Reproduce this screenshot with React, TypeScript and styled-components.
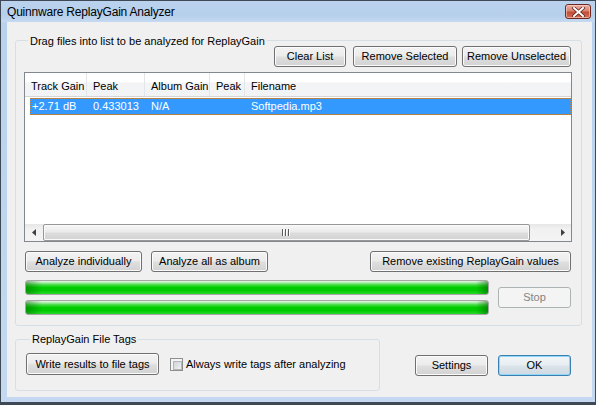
import React from "react";
import styled, { createGlobalStyle, css } from "styled-components";

const Global = createGlobalStyle`
  html, body { margin: 0; padding: 0; }
  body {
    background: #ffffff;
    font-family: "Liberation Sans", Arial, sans-serif;
    font-size: 11px;
    color: #000;
  }
  * { box-sizing: border-box; }
`;

const Window = styled.div`
  width: 596px;
  height: 405px;
  display: flex;
  flex-direction: column;
  background: linear-gradient(to bottom, #b9d1ec 0%, #c4d9f1 100%);
  border: 1px solid #3f4855;
  border-bottom-width: 3px;
  padding: 0 3px 5px 6px;
`;

const TitleBar = styled.div`
  height: 21px;
  display: flex;
  align-items: flex-start;
  margin-left: -6px;
  margin-right: -3px;
  padding: 0 0 0 6px;
  background: linear-gradient(to bottom, #bad2ed 0%, #b6cfeb 70%, #c5daf2 100%);
`;

const Title = styled.div`
  flex: 1;
  font-size: 12px;
  letter-spacing: -0.2px;
  line-height: 21px;
  padding-top: 1px;
  color: #000;
`;

const CloseBtn = styled.div`
  width: 26px;
  height: 15px;
  margin: 3px 4px 0 0;
  border: 1px solid #6e2a22;
  border-radius: 3px;
  background: linear-gradient(to bottom, #e9b0a3 0%, #d88474 45%, #c24d35 55%, #d4705a 100%);
  box-shadow: inset 0 0 0 1px rgba(255, 220, 210, 0.55);
  display: flex;
  align-items: center;
  justify-content: center;
`;

const Client = styled.div`
  flex: 1;
  background: #f0f0f0;
  display: flex;
  flex-direction: column;
  padding: 18px 10px 6px 8px;
`;

const Group = styled.div<{ $w?: number }>`
  border: 1px solid #d5dfe5;
  border-radius: 3px;
  display: flex;
  flex-direction: column;
  ${(p) => (p.$w ? `width: ${p.$w}px;` : "")}
`;

const MainGroup = styled(Group)`
  padding: 5px 9px 10px 8px;
`;

const TagGroup = styled(Group)`
  padding: 13px 8px 15px 10px;
`;

const GroupLabel = styled.div<{ $mt: number; $mb: number }>`
  align-self: flex-start;
  background: #f0f0f0;
  line-height: 13px;
  height: 13px;
  padding: 0 2px;
  margin: ${(p) => p.$mt}px 0 ${(p) => p.$mb}px 4px;
  white-space: nowrap;
  position: relative;
  z-index: 1;
`;

const Row = styled.div<{ $gap?: number; $mt?: number; $justify?: string; $align?: string }>`
  display: flex;
  align-items: ${(p) => p.$align ?? "center"};
  justify-content: ${(p) => p.$justify ?? "flex-start"};
  gap: ${(p) => p.$gap ?? 0}px;
  margin-top: ${(p) => p.$mt ?? 0}px;
`;

const Spacer = styled.div`
  flex: 1;
`;

const Button = styled.button<{ $w: number; $h?: number; $kind?: "normal" | "default" | "disabled"; $mr?: number }>`
  width: ${(p) => p.$w}px;
  height: ${(p) => p.$h ?? 21}px;
  margin: 0 ${(p) => p.$mr ?? 0}px 0 0;
  padding: 0 0 1px;
  font-family: "Liberation Sans", Arial, sans-serif;
  font-size: 11px;
  color: #000;
  border: 1px solid #707070;
  border-radius: 3px;
  background: linear-gradient(to bottom, #f3f3f3 0%, #ececec 45%, #dedede 55%, #d2d2d2 100%);
  box-shadow: inset 0 0 0 1px #fbfbfb;
  white-space: nowrap;
  flex-shrink: 0;
  ${(p) =>
    p.$kind === "default" &&
    css`
      border-color: #3c7fb1;
      box-shadow: inset 0 0 0 1px #8fd7f8;
      background: linear-gradient(to bottom, #f1f5f8 0%, #e8eef2 45%, #dae3ea 55%, #cfd9e1 100%);
    `}
  ${(p) =>
    p.$kind === "disabled" &&
    css`
      border-color: #adb2b5;
      background: #f4f4f4;
      box-shadow: none;
      color: #838383;
    `}
`;

/* ListView */
const ListView = styled.div`
  height: 170px;
  margin-top: 5px;
  border: 1px solid #828790;
  background: #fff;
  display: flex;
  flex-direction: column;
`;

const Header = styled.div`
  display: grid;
  grid-template-columns: 62px 58px 65px 35px 1fr;
  height: 24px;
  border-bottom: 1px solid #d5d5d5;
  background: linear-gradient(to bottom, #ffffff 0%, #ffffff 40%, #f3f4f6 42%, #f2f3f5 100%);
`;

const HeaderCell = styled.div<{ $last?: boolean }>`
  padding: 3px 0 0 6px;
  line-height: 20px;
  white-space: nowrap;
  border-right: ${(p) => (p.$last ? "none" : "1px solid #e3e5e8")};
`;

const ListBody = styled.div`
  flex: 1;
  padding-top: 1px;
`;

const SelRow = styled.div`
  display: grid;
  grid-template-columns: 56px 58px 65px 35px 1fr;
  height: 17px;
  margin-left: 5px;
  background: #3399ff;
  border: 1px dotted #b9844a;
  color: #fff;
`;

const Cell = styled.div<{ $first?: boolean }>`
  padding-left: ${(p) => (p.$first ? 1 : 6)}px;
  line-height: 15px;
  white-space: nowrap;
`;

const HScroll = styled.div`
  height: 17px;
  display: flex;
  align-items: stretch;
  background: linear-gradient(to bottom, #e6e6e6 0%, #f1f1f1 30%, #f4f4f4 100%);
`;

const ScrollArrow = styled.div`
  width: 17px;
  display: flex;
  align-items: center;
  justify-content: center;
`;

const ScrollTrack = styled.div`
  flex: 1;
  display: flex;
  align-items: stretch;
  padding: 0 1px;
`;

const Thumb = styled.div`
  height: 17px;
  border: 1px solid #979797;
  border-radius: 2px;
  background: linear-gradient(to bottom, #f6f6f6 0%, #ececec 45%, #dcdcdc 55%, #d2d2d2 100%);
  box-shadow: inset 0 0 0 1px #fafafa;
  display: flex;
  align-items: center;
  justify-content: center;
`;

const Grip = styled.div`
  width: 9px;
  height: 7px;
  background: repeating-linear-gradient(to right, #5b5b5b 0, #5b5b5b 1px, #ffffff 1px, #ffffff 2px, transparent 2px, transparent 3px);
`;

/* Progress */
const ProgressArea = styled.div`
  display: flex;
  align-items: center;
  gap: 9px;
  margin-top: 8px;
  padding-left: 1px;
`;

const Bars = styled.div`
  flex: 1;
  display: flex;
  flex-direction: column;
  gap: 5px;
`;

const Bar = styled.div`
  height: 15px;
  border: 1px solid #a6a6a6;
  border-radius: 3px;
  background:
    linear-gradient(to right, rgba(0, 70, 0, 0.38) 0px, rgba(0, 70, 0, 0) 16px, rgba(0, 70, 0, 0) calc(100% - 12px), rgba(0, 70, 0, 0.45) 100%),
    linear-gradient(to bottom, #e8f7e8 0%, #a6eca6 14%, #3fdb3f 30%, #00cd00 50%, #00c900 72%, #27da27 100%);
`;

/* Tags */
const CheckWrap = styled.label`
  display: flex;
  align-items: center;
  gap: 3px;
  margin-left: 11px;
  white-space: nowrap;
`;

const CheckBox = styled.span`
  width: 13px;
  height: 13px;
  border: 1px solid #8e8f8f;
  background: #f4f4f4;
  padding: 2px;
  display: block;
  &::after {
    content: "";
    display: block;
    width: 7px;
    height: 7px;
    border: 1px solid #b2b5b9;
    background: linear-gradient(135deg, #cfd3d7 0%, #e3e5e8 60%, #f3f3f3 100%);
  }
`;

const BottomRow = styled.div`
  display: flex;
  align-items: flex-end;
  margin-top: 13px;
`;

const BottomButtons = styled.div`
  display: flex;
  gap: 10px;
  margin: 0 11px 15px auto;
`;

const ArrowLeft = () => (
  <svg width="4" height="7" viewBox="0 0 4 7">
    <path d="M4 0 L0 3.5 L4 7 Z" fill="#404040" />
  </svg>
);
const ArrowRight = () => (
  <svg width="4" height="7" viewBox="0 0 4 7">
    <path d="M0 0 L4 3.5 L0 7 Z" fill="#404040" />
  </svg>
);

const CloseX = () => (
  <svg width="13" height="10" viewBox="0 0 13 10">
    <path d="M2 1 L11 9 M11 1 L2 9" stroke="#5a1d14" strokeWidth="3.4" strokeLinecap="square" />
    <path d="M2 1 L11 9 M11 1 L2 9" stroke="#ffffff" strokeWidth="2" strokeLinecap="square" />
  </svg>
);

export default function App() {
  return (
    <>
      <Global />
      <Window>
        <TitleBar>
          <Title>Quinnware ReplayGain Analyzer</Title>
          <CloseBtn>
            <CloseX />
          </CloseBtn>
        </TitleBar>
        <Client>
          <MainGroup>
            <GroupLabel $mt={-11} $mb={-2}>Drag files into list to be analyzed for ReplayGain</GroupLabel>
            <Row $justify="flex-end">
              <Button $w={72} $mr={7}>Clear List</Button>
              <Button $w={104} $mr={5}>Remove Selected</Button>
              <Button $w={109} $mr={1}>Remove Unselected</Button>
            </Row>
            <ListView>
              <Header>
                <HeaderCell>Track Gain</HeaderCell>
                <HeaderCell>Peak</HeaderCell>
                <HeaderCell>Album Gain</HeaderCell>
                <HeaderCell>Peak</HeaderCell>
                <HeaderCell $last>Filename</HeaderCell>
              </Header>
              <ListBody>
                <SelRow>
                  <Cell $first>+2.71 dB</Cell>
                  <Cell>0.433013</Cell>
                  <Cell>N/A</Cell>
                  <Cell></Cell>
                  <Cell>Softpedia.mp3</Cell>
                </SelRow>
              </ListBody>
              <HScroll>
                <ScrollArrow>
                  <ArrowLeft />
                </ScrollArrow>
                <ScrollTrack>
                  <Thumb style={{ width: 487 }}>
                    <Grip />
                  </Thumb>
                </ScrollTrack>
                <ScrollArrow>
                  <ArrowRight />
                </ScrollArrow>
              </HScroll>
            </ListView>
            <Row $mt={9}>
              <Button $w={117} $mr={9} style={{ marginLeft: 1 }}>Analyze individually</Button>
              <Button $w={117}>Analyze all as album</Button>
              <Spacer />
              <Button $w={201} $mr={1}>Remove existing ReplayGain values</Button>
            </Row>
            <ProgressArea>
              <Bars>
                <Bar />
                <Bar />
              </Bars>
              <Button $w={73} $mr={1} $kind="disabled">Stop</Button>
            </ProgressArea>
          </MainGroup>
          <BottomRow>
            <TagGroup $w={365}>
              <GroupLabel $mt={-20} $mb={7}>ReplayGain File Tags</GroupLabel>
              <Row>
                <Button $w={133} $h={22}>Write results to file tags</Button>
                <CheckWrap>
                  <CheckBox />
                  <span>Always write tags after analyzing</span>
                </CheckWrap>
              </Row>
            </TagGroup>
            <BottomButtons>
              <Button $w={73}>Settings</Button>
              <Button $w={73} $kind="default">OK</Button>
            </BottomButtons>
          </BottomRow>
        </Client>
      </Window>
    </>
  );
}
